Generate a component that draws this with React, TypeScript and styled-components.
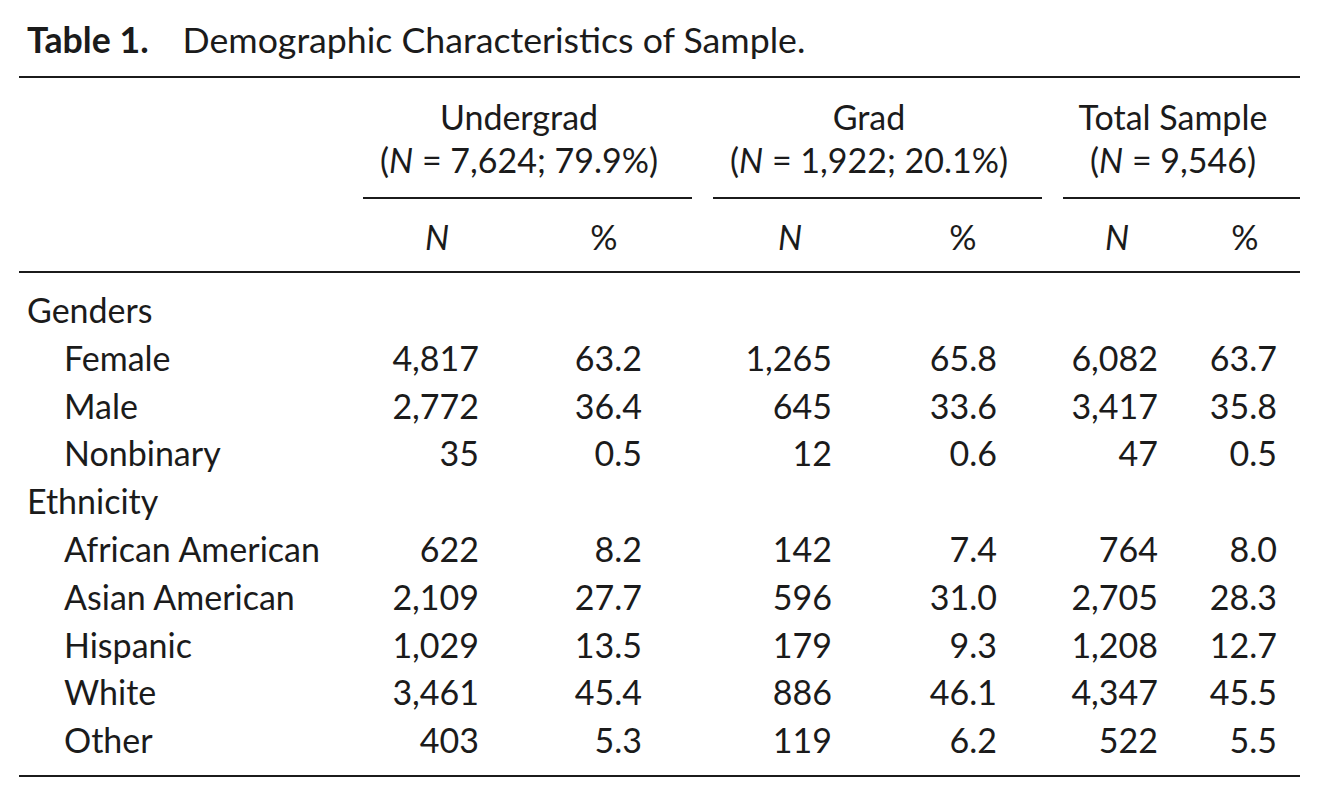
import React, {FC} from 'react';
import styled, {createGlobalStyle} from 'styled-components';

const GlobalStyle = createGlobalStyle`
    html, body {
        margin: 0;
        padding: 0;
        background: #ffffff;
    }
    body {
        font-family: Lato, "Open Sans", sans-serif;
        color: #1b1b1b;
    }
`;

const TEMPLATE = '344px 158px 192px 158px 192px 127px 110px';

// content box of each numeric column: [padding-left, padding-right]
const numCols: Array<[number, number]> = [
    [32, 42],
    [45, 71],
    [35, 39],
    [58, 66],
    [13, 32],
    [23, 23],
];

const Page = styled.div`
    width: 1326px;
    height: 804px;
    padding: 16px 0 0 0;
    box-sizing: border-box;
`;

const Title = styled.div`
    margin-left: 27px;
    font-size: 35.7px;
    line-height: 48px;
    white-space: nowrap;
`;

const TitleLabel = styled.span`
    font-weight: 700;
    margin-right: 34px;
`;

const Table = styled.div`
    margin: 12px 0 0 19px;
    width: 1281px;
    border-top: 2px solid #1b1b1b;
    border-bottom: 2px solid #1b1b1b;
    font-size: 34px;
`;

const Row = styled.div`
    display: grid;
    grid-template-columns: ${TEMPLATE};
`;

const GroupHead = styled.div<{$gap: number}>`
    grid-column: span 2;
    margin-right: ${(p) => p.$gap}px;
    padding: 17px 17px 16px 0;
    border-bottom: 2px solid #1b1b1b;
    text-align: center;
    line-height: 43px;
    white-space: nowrap;
`;

const SubRow = styled(Row)`
    padding: 14px 0 10px 0;
    line-height: 48px;
    border-bottom: 2px solid #1b1b1b;
`;

const SubHead = styled.div<{$pl: number; $pr: number}>`
    padding: 0 ${(p) => p.$pr}px 0 ${(p) => p.$pl}px;
    text-align: center;
`;

const Body = styled.div`
    padding: 13px 0 11px 0;
`;

const DataRow = styled(Row)`
    line-height: 47.8px;
`;

const Label = styled.div<{$indent: boolean}>`
    padding-left: ${(p) => (p.$indent ? 45 : 8)}px;
    white-space: nowrap;
`;

const Num = styled.div<{$pr: number}>`
    padding-right: ${(p) => p.$pr}px;
    text-align: right;
    white-space: nowrap;
`;

const Ital = styled.i`
    font-style: italic;
`;

type Line = {label: string; indent: boolean; values?: string[]};

const lines: Line[] = [
    {label: 'Genders', indent: false},
    {label: 'Female', indent: true, values: ['4,817', '63.2', '1,265', '65.8', '6,082', '63.7']},
    {label: 'Male', indent: true, values: ['2,772', '36.4', '645', '33.6', '3,417', '35.8']},
    {label: 'Nonbinary', indent: true, values: ['35', '0.5', '12', '0.6', '47', '0.5']},
    {label: 'Ethnicity', indent: false},
    {label: 'African American', indent: true, values: ['622', '8.2', '142', '7.4', '764', '8.0']},
    {label: 'Asian American', indent: true, values: ['2,109', '27.7', '596', '31.0', '2,705', '28.3']},
    {label: 'Hispanic', indent: true, values: ['1,029', '13.5', '179', '9.3', '1,208', '12.7']},
    {label: 'White', indent: true, values: ['3,461', '45.4', '886', '46.1', '4,347', '45.5']},
    {label: 'Other', indent: true, values: ['403', '5.3', '119', '6.2', '522', '5.5']},
];

const groups = [
    {name: 'Undergrad', detail: '7,624; 79.9%', gap: 21},
    {name: 'Grad', detail: '1,922; 20.1%', gap: 21},
    {name: 'Total Sample', detail: '9,546', gap: 0},
];

const App: FC = () => {
    return (
        <Page>
            <GlobalStyle/>
            <Title>
                <TitleLabel>{'Table 1.'}</TitleLabel>
                {'Demographic Characteristics of Sample.'}
            </Title>
            <Table>
                <Row>
                    <div/>
                    {groups.map((g) => (
                        <GroupHead
                            key={g.name}
                            $gap={g.gap}
                        >
                            {g.name}
                            <br/>
                            {'('}<Ital>{'N'}</Ital>{` = ${g.detail})`}
                        </GroupHead>
                    ))}
                </Row>
                <SubRow>
                    <div/>
                    {numCols.map(([pl, pr], i) => (
                        <SubHead
                            key={i}
                            $pl={pl}
                            $pr={pr}
                        >
                            {i % 2 === 0 ? <Ital>{'N'}</Ital> : '%'}
                        </SubHead>
                    ))}
                </SubRow>
                <Body>
                    {lines.map((line) => (
                        <DataRow key={line.label}>
                            <Label $indent={line.indent}>{line.label}</Label>
                            {line.values && line.values.map((v, i) => (
                                <Num
                                    key={i}
                                    $pr={numCols[i][1]}
                                >
                                    {v}
                                </Num>
                            ))}
                        </DataRow>
                    ))}
                </Body>
            </Table>
        </Page>
    );
};

export default App;
